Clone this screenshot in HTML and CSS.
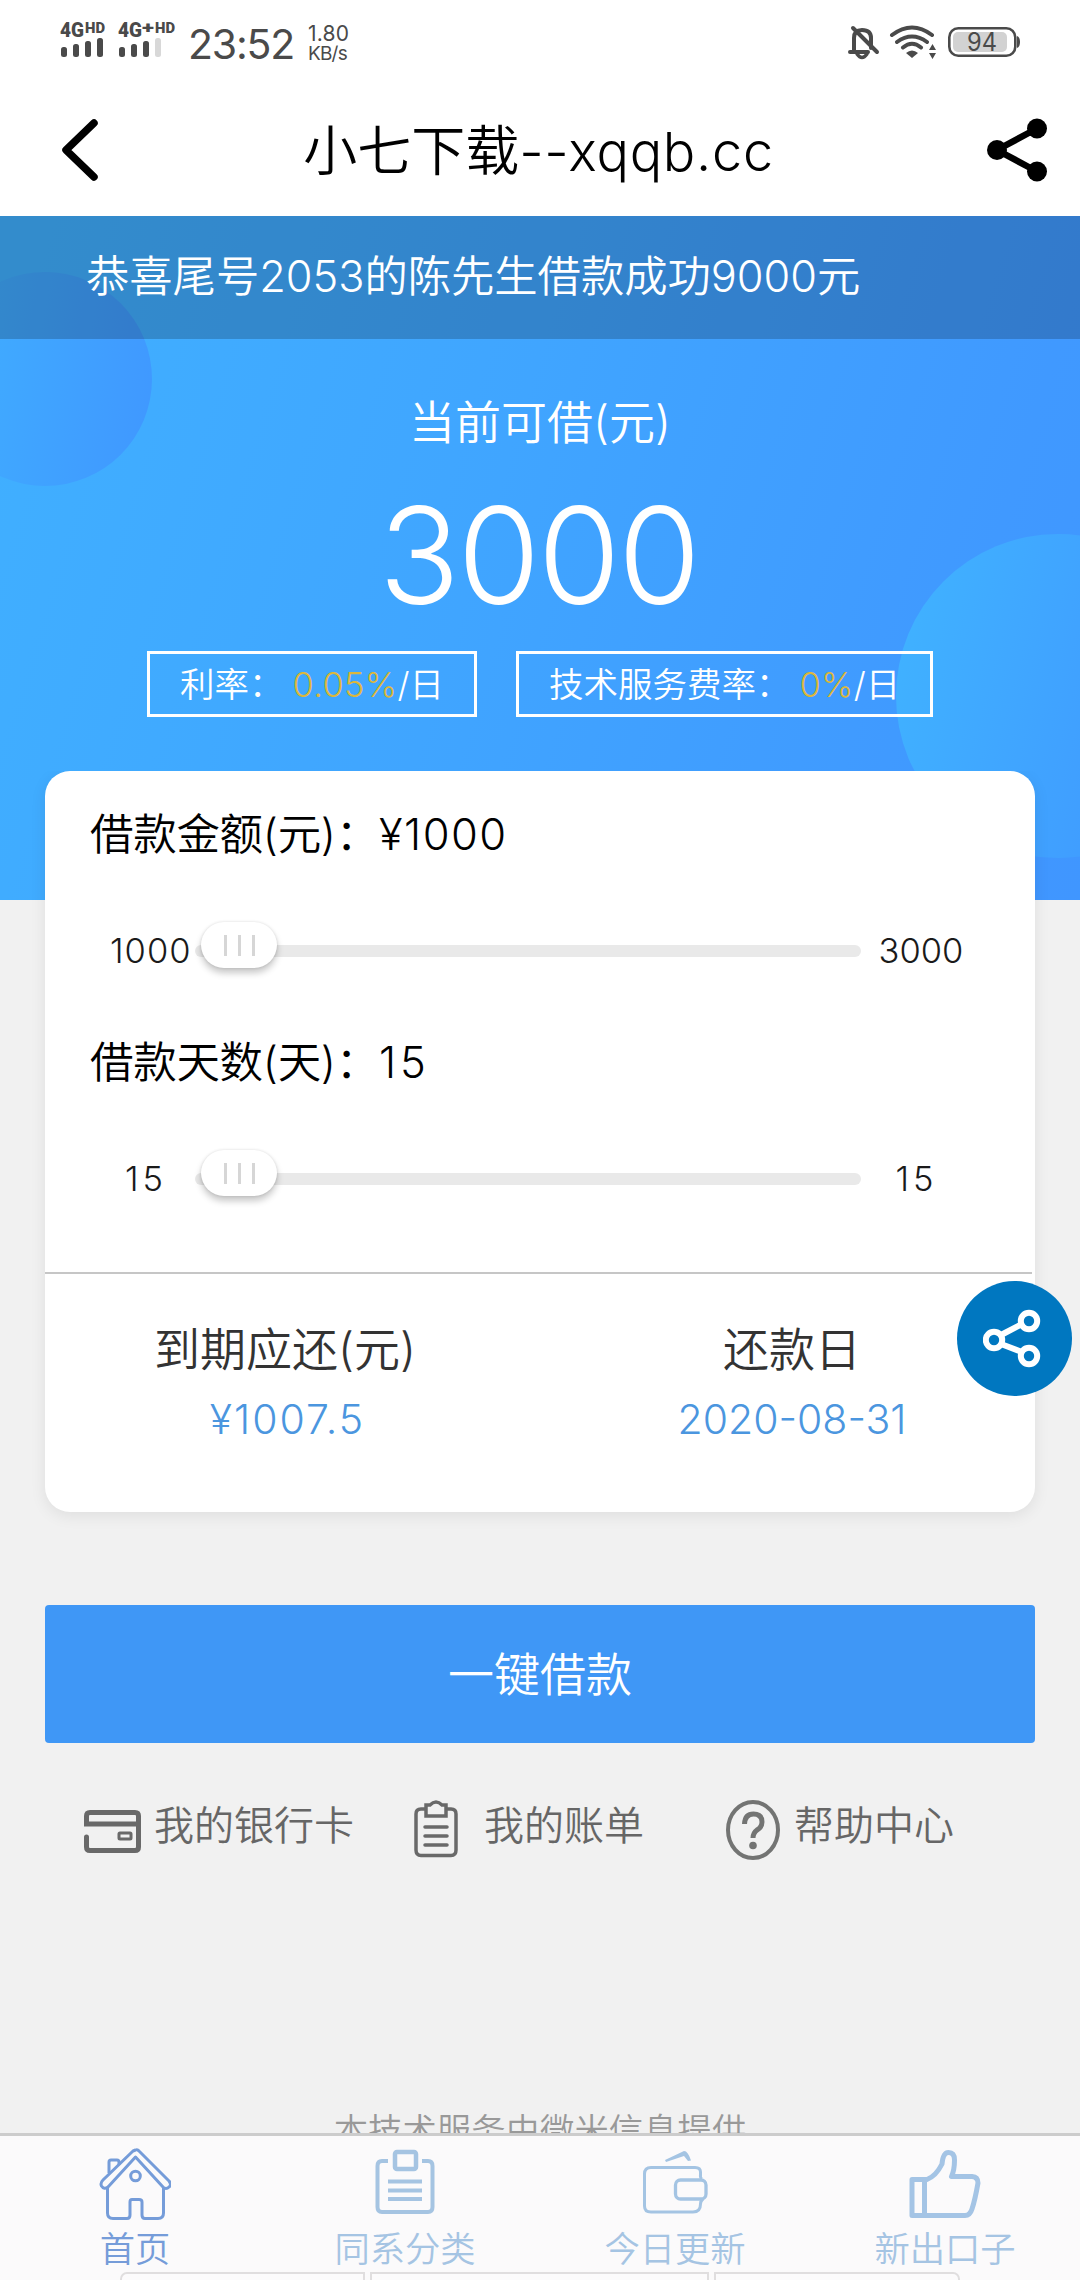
FILE: index.html
```html
<!DOCTYPE html>
<html lang="zh-CN">
<head>
<meta charset="utf-8">
<title>小七下载--xqqb.cc</title>
<link rel="stylesheet" href="styles.css">
</head>
<body>
<div class="screen">
  <header class="status">
    <svg class="signals" width="120" height="44" viewBox="58 18 120 44" fill="#4a4a4a">
      <g class="net"><text x="60" y="37" font-size="20" textLength="24" lengthAdjust="spacingAndGlyphs">4G</text><text x="85" y="33" font-size="14" textLength="20" lengthAdjust="spacingAndGlyphs">HD</text>
      <text x="118" y="37" font-size="20" textLength="24" lengthAdjust="spacingAndGlyphs">4G</text><text x="142" y="33" font-size="17" textLength="12" lengthAdjust="spacingAndGlyphs">+</text><text x="155" y="33" font-size="14" textLength="20" lengthAdjust="spacingAndGlyphs">HD</text></g>
      <rect x="61" y="47" width="6" height="10" rx="2.5"/><rect x="73" y="44" width="6" height="13" rx="2.5"/><rect x="85" y="41" width="6" height="16" rx="2.5"/><rect x="97" y="38" width="6" height="19" rx="2.5"/>
      <rect x="119" y="47" width="6" height="10" rx="2.5"/><rect x="131" y="44" width="6" height="13" rx="2.5"/><rect x="143" y="41" width="6" height="16" rx="2.5"/><rect x="155" y="38" width="6" height="19" rx="2.5" fill="#d8d8d8"/>
    </svg>
    <div class="clock">23:52</div>
    <div class="speed"><span>1.80</span><span class="unit">KB/s</span></div>
    <svg class="sys" width="180" height="44" viewBox="844 20 180 44" fill="none" stroke="#4a4a4a" stroke-linecap="round" stroke-width="4">
      <path d="M854 52V38Q854 30 862 30Q871 30 871 38V48M850 52H868M853 28L877 52"/>
      <path d="M857 54Q862 61 867 54" stroke-width="3.5"/>
      <path d="M892 35Q912 20 932 35M897 42Q912 31 927 42M903 47.500Q912 40 921 47.500"/>
      <path d="M906 53Q912 48 918 53L912 58Z" fill="#4a4a4a" stroke="none"/>
      <path d="M929 50L932.500 44L936 50ZM929 53L932.500 59L936 53Z" fill="#4a4a4a" stroke="none"/>
      <rect x="953" y="32" width="54" height="20" rx="5" fill="#d2d2d2" stroke="none"/>
      <rect x="949.300" y="28.300" width="66" height="27.400" rx="9" stroke-width="2.600"/>
      <path d="M1017 36Q1020 37 1020 42T1017 48Z" fill="#4a4a4a" stroke="none"/>
      <text class="pct" x="967" y="51" textLength="30" lengthAdjust="spacingAndGlyphs">94</text>
    </svg>
  </header>
  <nav class="titlebar">
    <svg width="44" height="72" viewBox="58 114 44 72"><path d="M94 123L66 150L94 177" fill="none" stroke="#000" stroke-width="7.500" stroke-linecap="round" stroke-linejoin="round"/></svg>
    <h1><span>小七下载</span><span class="site">--xqqb.cc</span></h1>
    <svg width="64" height="68" viewBox="984 116 64 68"><path d="M1037 128.500L997 150L1037 171.500" fill="none" stroke="#000" stroke-width="6.500"/><circle cx="997" cy="150" r="10"/><circle cx="1037" cy="128.500" r="10"/><circle cx="1037" cy="171.500" r="10"/></svg>
  </nav>

  <section class="hero">
    <div class="notice">恭喜尾号2053的陈先生借款成功9000元</div>
    <div class="hero-label">当前可借(元)</div>
    <div class="hero-amount">3000</div>
    <div class="rates">
      <div class="rate"><span>利率：</span><b>0.05%</b><span>/日</span></div>
      <div class="rate"><span>技术服务费率：</span><b>0%</b><span>/日</span></div>
    </div>
  </section>

  <main>
    <section class="card">
      <div class="field"><span class="name">借款金额(元)：</span><span class="value">¥1000</span></div>
      <div class="slider"><span class="end">1000</span><div class="track"><div class="thumb"><i></i><i></i><i></i></div></div><span class="end">3000</span></div>
      <div class="field"><span class="name">借款天数(天)：</span><span class="value days">15</span></div>
      <div class="slider"><span class="end low">15</span><div class="track"><div class="thumb"><i></i><i></i><i></i></div></div><span class="end high">15</span></div>
      <div class="due">
        <div class="due-col"><span>到期应还(元)</span><em>¥1007.5</em></div>
        <div class="due-col"><span>还款日</span><em class="date">2020-08-31</em></div>
      </div>
    </section>
    <button class="apply">一键借款</button>
    <div class="links">
      <a class="link bank"><svg width="58" height="44" viewBox="0 0 58 44" fill="none" stroke="#696969" stroke-width="5"><path d="M2.500 27V37Q2.500 40.500 6 40.500H51Q54.500 40.500 54.500 37V6Q54.500 2.500 51 2.500H6Q2.500 2.500 2.500 6V14H54" stroke-linecap="round"/><rect x="35" y="23" width="12" height="6" rx="1" stroke-width="3"/></svg><span>我的银行卡</span></a>
      <a class="link bill"><svg width="44" height="58" viewBox="0 0 44 58" fill="none" stroke="#696969" stroke-width="3.500"><path d="M12 9H7Q2 9 2 14V50Q2 55.500 7 55.500H37Q42 55.500 42 50V14Q42 9 37 9H32M12 5H16Q22-1 28 5H32V16H12Z"/><path d="M11 27H33M11 36H33M11 45H33" stroke-linecap="round"/></svg><span>我的账单</span></a>
      <a class="link help"><svg width="54" height="60" viewBox="0 0 54 60" fill="none" stroke="#737473" stroke-width="4"><ellipse cx="27" cy="30" rx="25" ry="28"/><path d="M18.500 24Q19 14 27.500 14Q36 14 36 22Q36 27 31 30Q27 33 27 38" stroke-width="5"/><circle cx="27" cy="45.500" r="3.800" fill="#737473" stroke="none"/></svg><span>帮助中心</span></a>
    </div>
    <p class="provider">本技术服务由微米信息提供</p>
  </main>

  <footer class="tabs">
    <a class="tab active"><svg width="72" height="76" viewBox="98 2146 72 76" fill="none" stroke="#759cd9" stroke-width="3" stroke-linejoin="round"><path d="M134.500 2150Q136.500 2149 138 2151L168 2181Q171 2185 168 2187Q165 2190 162 2187L134.500 2157L107 2187Q103 2190 100.500 2186Q99 2183 102 2180L132 2151Z" /><path d="M108 2173V2162Q108 2160 110 2160H116Q118 2160 118 2162V2165"/><path d="M106.500 2187V2213Q106.500 2218.500 112 2218.500H126Q129 2218.500 129 2215V2202Q129 2199.500 131 2199.500H138Q141 2199.500 141 2202V2215Q141 2218.500 144 2218.500H157Q162.500 2218.500 162.500 2213V2187"/><circle cx="134.500" cy="2176" r="4.800"/></svg><span>首页</span></a>
    <a class="tab"><svg width="64" height="76" viewBox="373 2146 64 76" fill="none" stroke="#a5c4e2" stroke-width="4"><path d="M388 2161H382Q377.500 2161 377.500 2166V2207Q377.500 2212 382 2212H428Q432.500 2212 432.500 2207V2166Q432.500 2161 428 2161H422M388 2181.500H422M388 2190.500H422M388 2199H422"/><rect x="395" y="2152" width="21" height="17" rx="2" stroke-width="4.500"/></svg><span>同系分类</span></a>
    <a class="tab"><svg width="70" height="76" viewBox="640 2146 70 76" fill="none" stroke="#a4c4e3" stroke-width="3"><path d="M665 2160L684 2151Q688 2151 691 2160.500L688 2161L684 2156L666 2162Z" fill="#a4c4e3" stroke="none"/><path d="M702 2179Q700 2178 700.500 2174V2172Q700.500 2167.500 695 2167.500H651Q644.500 2167.500 644.500 2174V2206Q644.500 2212 651 2212H693Q700.500 2212 700.500 2204Q700.500 2201 703 2199"/><rect x="675.500" y="2180" width="30.500" height="19" rx="5" stroke-width="3.300"/></svg><span>今日更新</span></a>
    <a class="tab"><svg width="76" height="76" viewBox="907 2146 76 76" fill="none" stroke="#a4c4e5" stroke-width="5" stroke-linejoin="round"><path d="M912 2179.500H927Q936 2176 942 2164Q943 2152.500 948.500 2152.500Q954.500 2152.500 954.500 2160Q954.500 2170 951.500 2176.500H972Q978 2177 978 2183Q975 2200 972 2209Q970 2215.500 965 2215.500H912ZM924.500 2180V2215"/></svg><span>新出口子</span></a>
    <div class="slots"><i></i><i></i><i></i></div>
  </footer>
  <div class="share"><svg width="60" height="60" viewBox="0 0 60 60" fill="none" stroke="#fff" stroke-width="6"><circle cx="11" cy="31" r="8.200"/><circle cx="46" cy="12" r="8.200"/><circle cx="46" cy="47" r="8.200"/><path d="M18 26L39 15M18 35L39 43"/></svg></div>
</div>
</body>
</html>
```
FILE: styles.css
```css
* { box-sizing: border-box; }
body { margin: 0; background: #f1f1f1; font-family: Inter, "Noto Sans CJK SC", sans-serif; font-weight: 350; color: #000; }
svg { display: block; flex: none; }
.screen { position: relative; width: 1080px; height: 2280px; overflow: hidden; display: flex; flex-direction: column; }
.status { height: 84px; flex: none; background: #fff; display: flex; align-items: flex-start; padding: 18px 56px 0 58px; color: #4a4a4a; }
.net { font-family: Roboto, sans-serif; font-weight: 900; }
.clock { margin: 1px 0 0 10px; width: 120px; font-size: 41px; line-height: 50px; letter-spacing: -1.2px; font-weight: 400; white-space: nowrap; }
.speed { display: flex; flex-direction: column; font-size: 21px; line-height: 20px; font-weight: 400; margin-top: 6px; letter-spacing: .2px; }
.unit { font-size: 19px; letter-spacing: -.8px; }
.sys { margin: 2px 0 0 auto; }
.pct { font-size: 25px; fill: #4a4a4a; stroke: none; font-weight: 400; }
.titlebar { height: 132px; flex: none; background: #fff; display: flex; align-items: center; justify-content: space-between; padding: 0 32px 0 58px; }
h1 { margin: 4px 9px 0 0; font-size: 54px; line-height: 80px; font-weight: 350; display: flex; white-space: nowrap; }
.site { letter-spacing: .7px; }
.hero { height: 684px; flex: none; color: #fff; display: flex; flex-direction: column; align-items: center; background: linear-gradient(107deg, #40b0ff 0%, #40a5ff 45%, #4099ff 85%, #4096ff 100%); position: relative; overflow: hidden; }
.hero::before, .hero::after { content: ""; position: absolute; border-radius: 50%; }
.hero::before { left: -62px; top: 56px; width: 214px; height: 214px; background: linear-gradient(100deg, #40aaff 25%, #4097ff 100%); }
.hero::after { left: 896px; top: 318px; width: 324px; height: 324px; background: linear-gradient(105deg, #40b2ff 5%, #409eff 65%); }
.hero > * { position: relative; z-index: 1; }
.notice { align-self: stretch; height: 123px; line-height: 121px; padding-left: 86px; font-size: 43.300px; background: rgba(0,0,0,.2); white-space: nowrap; }
.hero-label { margin-top: 53px; font-size: 46px; line-height: 60px; }
.hero-amount { margin-top: 23px; font-size: 134px; line-height: 160px; letter-spacing: -2.500px; padding-right: 3px; }
.rates { display: flex; gap: 39px; margin-top: 16px; }
.rate { height: 66px; border: 3px solid #fff; padding: 0 30px; line-height: 62px; font-size: 34.500px; white-space: nowrap; display: flex; }
.rate:first-child { width: 330px; }
.rate:last-child { width: 417px; }
.rate b { font-weight: 350; color: #dcb73c; margin-left: 9px; letter-spacing: .3px; }
main { margin-top: -129px; padding: 0 45px; flex: 1; min-height: 0; position: relative; overflow: hidden; }
.card { height: 741px; background: #fff; border-radius: 25px; box-shadow: 0 4px 16px rgba(0,0,0,.08); padding-top: 32px; }
.field { height: 64px; line-height: 63px; padding-left: 45px; display: flex; font-size: 43.500px; white-space: nowrap; }
.name { width: 289px; letter-spacing: -.3px; }
.value { letter-spacing: 1.500px; }
.days { letter-spacing: 4px; }
.slider { display: grid; grid-template-columns: 150px 666px 1fr; align-items: center; height: 64px; margin: 52px 0 48px; font-size: 34.500px; color: #1a1a1a; }
.slider:has(+ .due) { margin-bottom: 0; }
.end { text-align: center; margin-top: -2px; }
.end:first-child { padding: 0 0 0 65px; text-align: left; letter-spacing: 1px; }
.end.low:first-child { padding-left: 80px; letter-spacing: 4px; }
.end:last-child { padding: 0 54px 0 0; }
.end.high:last-child { padding-right: 63px; letter-spacing: 4px; }
.track { height: 12px; border-radius: 6px; background: #e9e9e9; }
.thumb { width: 76px; height: 46px; margin: -24px 0 0 6px; border-radius: 23px; background: #fff; box-shadow: 0 0 3px rgba(0,0,0,.12), 0 5px 7px rgba(0,0,0,.22); display: flex; align-items: center; justify-content: center; gap: 11px; position: relative; top: 1px; }
.thumb i { width: 3px; height: 21px; background: #d6d6d6; }
.due { display: flex; width: 987px; margin-top: 61px; border-top: 2px solid #c6c6c6; padding: 43px 0 0; }
.due-col { width: 480px; margin-right: 27px; flex: none; display: flex; flex-direction: column; align-items: center; font-size: 46px; line-height: 64px; color: #333; }
.due-col em { font-style: normal; font-size: 41px; line-height: 77px; letter-spacing: 2px; padding-left: 5px; color: #4b96df; }
.due-col .date { letter-spacing: 0; padding: 0; }
.apply { display: block; width: 990px; height: 138px; margin: 93px 0 0; padding: 0 0 7px; border: 0; border-radius: 4px; background: #3f97f6; color: #fff; font: inherit; font-size: 46px; }
.links { display: flex; height: 64px; margin-top: 54px; font-size: 40px; line-height: 57px; color: #666; white-space: nowrap; }
.link { display: flex; }
.bank { width: 330px; padding-left: 39px; gap: 12px; }
.bill { width: 351px; padding-left: 39px; gap: 26px; }
.help { gap: 14px; }
.bank svg { margin-top: 13px; }
.bill svg { margin-top: 3px; }
.help svg { margin-top: 3px; }
.provider { margin: 245px 0 0; text-align: center; font-size: 34.400px; line-height: 50px; color: #999; white-space: nowrap; }
.tabs { position: relative; flex: none; height: 147px; border-top: 3px solid #ccc; background: #fbfafb; display: grid; grid-template-columns: repeat(4, 1fr); }
.tab { display: flex; flex-direction: column; align-items: center; padding-top: 10px; font-size: 35.300px; line-height: 50px; color: #a5c4e3; }
.tab span { margin-top: 3px; }
.active { color: #759cd9; }
.slots { position: absolute; left: 120px; top: 136px; width: 840px; height: 20px; display: flex; gap: 5px; }
.slots i { flex: 0 0 245px; border: 2px solid #e0dedf; background: #fcfbfc; border-radius: 7px 0 0 0; }
.slots i:nth-child(2) { flex-basis: 339px; border-radius: 0; }
.slots i:nth-child(3) { flex-basis: 246px; border-radius: 0 7px 0 0; }
.share { position: absolute; left: 957px; top: 1281px; width: 115px; height: 115px; border-radius: 50%; background: #0077c0; display: flex; align-items: center; justify-content: center; padding-right: 4px; }
```
